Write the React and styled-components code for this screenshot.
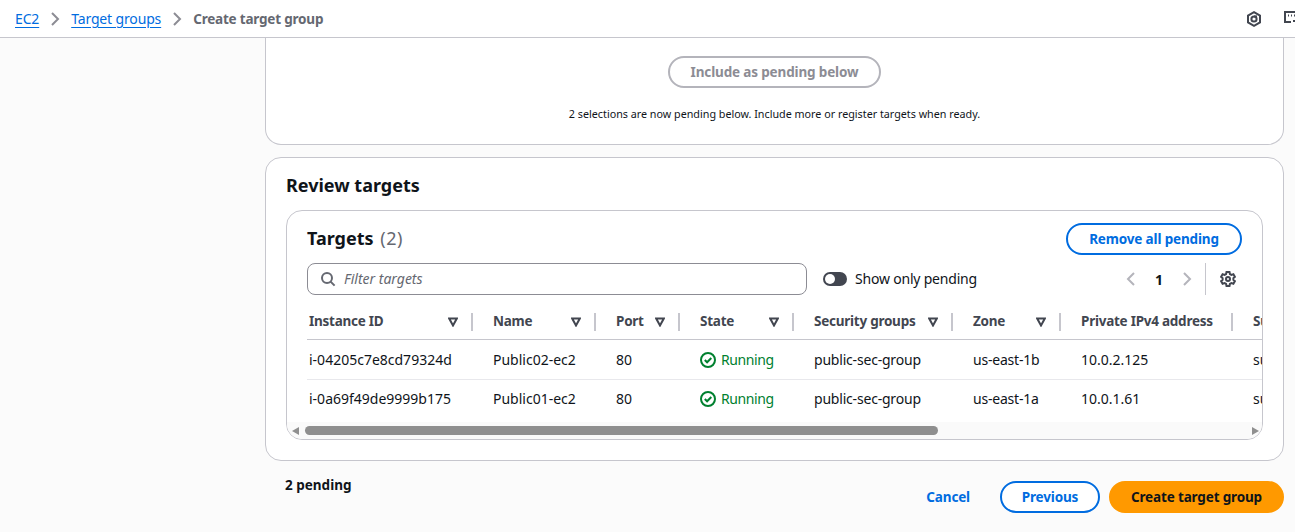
import styled, { createGlobalStyle } from 'styled-components';

const GlobalStyle = createGlobalStyle`
  html, body {
    margin: 0;
    padding: 0;
    height: 532px;
    overflow: hidden;
    background: #fbfbfb;
    font-family: "Noto Sans", "Open Sans", sans-serif;
    color: #0f141a;
  }
  * { box-sizing: border-box; }
`;

const TopBar = styled.header`
  height: 38px;
  background: #fff;
  border-bottom: 1px solid #c6c6cd;
  display: flex;
  align-items: center;
  justify-content: space-between;
  padding-left: 15px;
  overflow: hidden;
`;

const Crumbs = styled.nav`
  display: flex;
  align-items: center;
  font-size: 14px;
  line-height: 20px;
  letter-spacing: -0.15px;
`;

const CrumbLink = styled.a`
  color: #006ce0;
  text-decoration: underline;
  text-underline-offset: 3px;
`;

const CrumbSep = styled.svg`
  width: 16px;
  height: 16px;
  margin: 0 8px;
  fill: none;
  stroke: #8c8c94;
  stroke-width: 2;
`;

const CrumbCurrent = styled.span`
  font-size: 13.5px;
  font-weight: 700;
  letter-spacing: -0.2px;
  color: #656871;
`;

const TopIcons = styled.div`
  display: flex;
  align-items: center;
  gap: 22px;
  margin-right: -5px;
`;

const TopIcon = styled.svg`
  width: 16px;
  height: 16px;
  fill: none;
  stroke: #424650;
  stroke-width: 2;
`;

const Main = styled.main`
  padding: 0 11px 0 265px;
`;

const Card = styled.section`
  background: #fff;
  border: 1px solid #c6c6cd;
  border-radius: 16px;
`;

const SelectCard = styled(Card)`
  height: 107px;
  border-top: none;
  border-radius: 0 0 16px 16px;
  display: flex;
  flex-direction: column;
  align-items: center;
  padding-top: 18px;
`;

const Button = styled.button`
  width: ${(p) => p.$width}px;
  height: 32px;
  padding: 0;
  border-radius: 16px;
  border: 2px solid #006ce0;
  background: #fff;
  color: #006ce0;
  font-family: inherit;
  font-size: 13.5px;
  font-weight: 700;
  letter-spacing: -0.15px;
  line-height: 20px;
  white-space: nowrap;
`;

const DisabledButton = styled(Button)`
  border-color: #b4b4bb;
  color: #8c8c94;
`;

const Helper = styled.p`
  margin: 17px 0 0;
  font-size: 10.75px;
  line-height: 18px;
`;

const ReviewCard = styled(Card)`
  margin-top: 12px;
  height: 304px;
  padding: 15px 20px 0;
`;

const ReviewTitle = styled.h2`
  margin: 0;
  font-size: 18px;
  line-height: 24px;
  font-weight: 700;
`;

const TableCard = styled.div`
  margin-top: 13px;
  height: 230px;
  border: 1px solid #c6c6cd;
  border-radius: 16px;
  overflow: hidden;
  background: #fff;
  display: flex;
  flex-direction: column;
`;

const Toolbar = styled.div`
  padding: 12px 20px 0;
`;

const TitleRow = styled.div`
  display: flex;
  align-items: flex-start;
  justify-content: space-between;
`;

const TableTitle = styled.h3`
  margin: 0;
  font-size: 18px;
  line-height: 30px;
  font-weight: 700;
`;

const Count = styled.span`
  margin-left: 2px;
  font-weight: 400;
  letter-spacing: 0.5px;
  color: #656871;
`;

const FilterRow = styled.div`
  display: flex;
  align-items: center;
  margin-top: 8px;
  height: 32px;
`;

const FilterBox = styled.div`
  width: 500px;
  height: 32px;
  border: 1px solid #8c8c94;
  border-radius: 8px;
  display: flex;
  align-items: center;
  padding-left: 12px;
  gap: 8px;
`;

const FilterIcon = styled.svg`
  width: 16px;
  height: 16px;
  fill: none;
  stroke: #656871;
  stroke-width: 2;
`;

const Placeholder = styled.span`
  padding-bottom: 2px;
  font-size: 14px;
  font-style: italic;
  color: #656871;
`;

const Toggle = styled.div`
  width: 24px;
  height: 14px;
  margin-left: 16px;
  border-radius: 7px;
  background: #424650;
  padding: 2px;
`;

const ToggleKnob = styled.div`
  width: 10px;
  height: 10px;
  border-radius: 50%;
  background: #fff;
`;

const ToggleLabel = styled.span`
  margin-left: 8px;
  padding-bottom: 2px;
  font-size: 14px;
  letter-spacing: -0.2px;
`;

const Pager = styled.div`
  margin-left: auto;
  display: flex;
  align-items: center;
  height: 32px;
`;

const PagerArrow = styled.svg`
  width: 16px;
  height: 16px;
  fill: none;
  stroke: #b4b4bb;
  stroke-width: 2;
`;

const PagerNumber = styled.span`
  width: 40px;
  text-align: center;
  font-size: 14px;
  font-weight: 700;
`;

const PagerDivider = styled.div`
  width: 1px;
  height: 32px;
  margin: 0 14px 0 10px;
  background: #c6c6cd;
`;

const GearIcon = styled.svg`
  width: 16px;
  height: 16px;
  margin-right: 6px;
  fill: none;
  stroke: #424650;
  stroke-width: 2;
`;

const TableClip = styled.div`
  margin-left: 20px;
  margin-top: 11px;
  overflow: hidden;
  flex: 1;
`;

const Row = styled.div`
  display: grid;
  grid-template-columns: 184px 123px 84px 114px 159px 108px 172px 200px;
  width: 1144px;
  height: ${(p) => p.$height}px;
  border-bottom: 1px solid ${(p) => p.$line};
  align-items: center;
`;

const HeadCell = styled.div`
  position: relative;
  padding: 0 0 4px 2px;
  font-size: 13.5px;
  font-weight: 700;
  letter-spacing: -0.25px;
  color: #424650;
  white-space: nowrap;
  display: flex;
  align-items: center;
  height: 100%;
`;

const SortIcon = styled.svg`
  position: absolute;
  right: 33px;
  top: 11px;
  width: 10px;
  height: 10px;
  fill: none;
  stroke: #424650;
  stroke-width: 2;
`;

const ColumnDivider = styled.span`
  position: absolute;
  right: 18px;
  top: 7px;
  width: 2px;
  height: 18px;
  background: #c6c6cd;
`;

const Cell = styled.div`
  padding-left: 2px;
  font-size: 14px;
  line-height: 20px;
  letter-spacing: ${(p) => (p.$tight ? '-0.2px' : '0')};
  white-space: nowrap;
`;

const Status = styled(Cell)`
  display: flex;
  align-items: center;
  gap: 5px;
  letter-spacing: -0.4px;
  color: #00802f;
`;

const StatusIcon = styled.svg`
  width: 16px;
  height: 16px;
  fill: none;
  stroke: #00802f;
  stroke-width: 2;
`;

const ScrollBar = styled.div`
  height: 17px;
  background: #fafafa;
  display: flex;
  align-items: center;
  padding: 0 3px 0 5px;
`;

const ScrollArrow = styled.div`
  width: 0;
  height: 0;
  border-top: 4px solid transparent;
  border-bottom: 4px solid transparent;
  border-${(p) => (p.$left ? 'right' : 'left')}: 7px solid #8f8f8f;
`;

const ScrollThumb = styled.div`
  height: 9px;
  margin-left: 6px;
  border-radius: 5px;
  background: #8f8f8f;
`;

const ScrollSpacer = styled.div`
  flex: 1;
`;

const Footer = styled.footer`
  display: flex;
  align-items: flex-start;
  padding: 12px 11px 0 285px;
`;

const PendingNote = styled.span`
  font-size: 13.5px;
  font-weight: 700;
  line-height: 24px;
`;

const FooterActions = styled.div`
  margin-left: auto;
  display: flex;
  align-items: center;
  margin-top: 8px;
`;

const CancelLink = styled.a`
  color: #006ce0;
  font-size: 13.5px;
  font-weight: 700;
  letter-spacing: -0.15px;
  margin-right: 30px;
`;

const PrimaryButton = styled(Button)`
  margin-left: 9px;
  background: #ff9900;
  border-color: #ff9900;
  color: #0f141a;
`;

const columns = [
  'Instance ID',
  'Name',
  'Port',
  'State',
  'Security groups',
  'Zone',
  'Private IPv4 address',
  'Subnet ID',
];

const targets = [
  { id: 'i-04205c7e8cd79324d', name: 'Public02-ec2', zone: 'us-east-1b', ip: '10.0.2.125', subnet: 'subnet-0a1' },
  { id: 'i-0a69f49de9999b175', name: 'Public01-ec2', zone: 'us-east-1a', ip: '10.0.1.61', subnet: 'subnet-0b2' },
];

function Chevron({ as: Icon, left }) {
  return (
    <Icon viewBox="0 0 16 16">
      <path d={left ? 'M11 2 5 8l6 6' : 'm5 2 6 6-6 6'} />
    </Icon>
  );
}

export default function App() {
  return (
    <>
      <GlobalStyle />
      <TopBar>
        <Crumbs>
          <CrumbLink>EC2</CrumbLink>
          <Chevron as={CrumbSep} />
          <CrumbLink>Target groups</CrumbLink>
          <Chevron as={CrumbSep} />
          <CrumbCurrent>Create target group</CrumbCurrent>
        </Crumbs>
        <TopIcons>
          <TopIcon viewBox="0 0 16 16">
            <path d="M8 1.200 14 4.600v6.800L8 14.800 2 11.400V4.600z" />
            <circle cx="8" cy="8" r="2.600" />
            <path d="M8 5.400h3" />
          </TopIcon>
          <TopIcon viewBox="0 0 16 16">
            <path d="M7 11H1V1h14v6" />
            <path d="M4 4.500h1M7 4.500h1M10 4.500h1" />
            <path d="M9 10h6M12 7l3 3-3 3M15 10v5" />
          </TopIcon>
        </TopIcons>
      </TopBar>
      <Main>
        <SelectCard>
          <DisabledButton $width={213}>Include as pending below</DisabledButton>
          <Helper>2 selections are now pending below. Include more or register targets when ready.</Helper>
        </SelectCard>
        <ReviewCard>
          <ReviewTitle>Review targets</ReviewTitle>
          <TableCard>
            <Toolbar>
              <TitleRow>
                <TableTitle>
                  Targets <Count>(2)</Count>
                </TableTitle>
                <Button $width={176}>Remove all pending</Button>
              </TitleRow>
              <FilterRow>
                <FilterBox>
                  <FilterIcon viewBox="0 0 16 16">
                    <circle cx="7" cy="7" r="5" />
                    <path d="m10.600 10.600 4 4" />
                  </FilterIcon>
                  <Placeholder>Filter targets</Placeholder>
                </FilterBox>
                <Toggle>
                  <ToggleKnob />
                </Toggle>
                <ToggleLabel>Show only pending</ToggleLabel>
                <Pager>
                  <Chevron as={PagerArrow} left />
                  <PagerNumber>1</PagerNumber>
                  <Chevron as={PagerArrow} />
                  <PagerDivider />
                  <GearIcon viewBox="0 0 16 16">
                    <path d="M6.500 1h3l.4 2 1.500.9 2-.7 1.500 2.600-1.500 1.300v1.800l1.500 1.300-1.500 2.600-2-.7-1.500.9-.4 2h-3l-.4-2-1.500-.9-2 .7L1.100 10.200l1.500-1.300V7.100L1.100 5.800l1.500-2.600 2 .7 1.500-.9z" />
                    <circle cx="8" cy="8" r="2" />
                  </GearIcon>
                </Pager>
              </FilterRow>
            </Toolbar>
            <TableClip>
              <Row $height={34} $line="#c6c6cd">
                {columns.map((column, index) => (
                  <HeadCell key={column}>
                    {column}
                    {index < 6 && (
                      <SortIcon viewBox="0 0 10 10">
                        <path d="M1.200 1.500h7.600L5 8.500z" />
                      </SortIcon>
                    )}
                    {index < 7 && <ColumnDivider />}
                  </HeadCell>
                ))}
              </Row>
              {targets.map((target, index) => (
                <Row
                  key={target.id}
                  $height={index === 0 ? 40 : 39}
                  $line={index === 0 ? '#e8e8ec' : 'transparent'}
                >
                  <Cell>{target.id}</Cell>
                  <Cell>{target.name}</Cell>
                  <Cell>80</Cell>
                  <Status>
                    <StatusIcon viewBox="0 0 16 16">
                      <circle cx="8" cy="8" r="7" />
                      <path d="m4.800 8 2.300 2.300 4.200-4.300" />
                    </StatusIcon>
                    Running
                  </Status>
                  <Cell $tight>public-sec-group</Cell>
                  <Cell $tight>{target.zone}</Cell>
                  <Cell>{target.ip}</Cell>
                  <Cell>{target.subnet}</Cell>
                </Row>
              ))}
            </TableClip>
            <ScrollBar>
              <ScrollArrow $left />
              <ScrollThumb style={{ width: 633 }} />
              <ScrollSpacer />
              <ScrollArrow />
            </ScrollBar>
          </TableCard>
        </ReviewCard>
      </Main>
      <Footer>
        <PendingNote>2 pending</PendingNote>
        <FooterActions>
          <CancelLink>Cancel</CancelLink>
          <Button $width={100}>Previous</Button>
          <PrimaryButton $width={175}>Create target group</PrimaryButton>
        </FooterActions>
      </Footer>
    </>
  );
}
